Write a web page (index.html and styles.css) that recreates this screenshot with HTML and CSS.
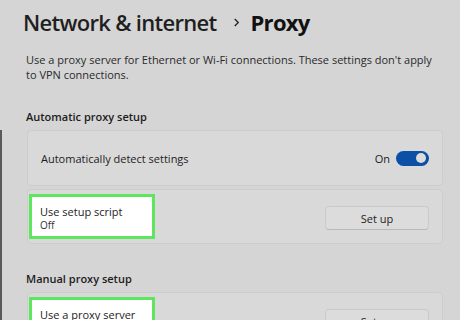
FILE: index.html
```html
<!DOCTYPE html>
<html lang="en">
<head>
    <meta charset="UTF-8">
    <meta name="viewport" content="width=device-width, initial-scale=1.0">
    <title>Proxy</title>
    <link rel="stylesheet" href="styles.css">
</head>
<body>
    <div class="settings">
        <h1 class="breadcrumb">
            <span class="crumb">Network &amp; internet</span>
            <svg class="chevron" viewBox="0 0 8 12" xmlns="http://www.w3.org/2000/svg">
                <path d="M2 2l4 4-4 4"/>
            </svg>
            <span class="current">Proxy</span>
        </h1>
        <p class="description">Use a proxy server for Ethernet or Wi-Fi connections. These settings don't apply to VPN connections.</p>

        <h2 class="section-title">Automatic proxy setup</h2>
        <div class="card">
            <span class="card-label">Automatically detect settings</span>
            <div class="toggle-wrap">
                <span class="toggle-state">On</span>
                <span class="toggle"><span class="knob"></span></span>
            </div>
        </div>
        <div class="card card-hl">
            <div class="highlight">
                <span class="card-label">Use setup script</span>
                <span class="card-sub">Off</span>
            </div>
            <button class="setup-btn">Set up</button>
        </div>

        <h2 class="section-title manual">Manual proxy setup</h2>
        <div class="card card-hl">
            <div class="highlight">
                <span class="card-label">Use a proxy server</span>
            </div>
            <button class="setup-btn">Set up</button>
        </div>
    </div>
</body>
</html>
```
FILE: styles.css
```css
body {
    margin: 0;
    background: #d5d5d5;
    font-family: 'Open Sans', 'Noto Sans', sans-serif;
    color: #1c1c1c;
    overflow: hidden;
}
.settings {
    position: relative;
    padding: 6px 17px 0 26px;
}
.settings::before {
    content: '';
    position: absolute;
    left: 0;
    top: 130px;
    width: 2px;
    height: 200px;
    background: #5a5a5a;
}
.breadcrumb {
    display: flex;
    align-items: center;
    margin: 0 0 0 -3px;
    font-size: 22px;
    line-height: 32px;
    font-weight: 600;
    color: #1f1f1f;
    letter-spacing: -0.7px;
}
.chevron {
    width: 7px;
    height: 11px;
    margin: 0 11px 0 16px;
    fill: none;
    stroke: #222;
    stroke-width: 1.5;
}
.current {
    font-weight: 700;
    color: #111;
}
.description {
    margin: 14px 0 0;
    font-size: 11px;
    line-height: 15px;
    color: #2a2a2a;
}
.section-title {
    margin: 28px 0 0;
    font-size: 11px;
    line-height: 14px;
    font-weight: 600;
    color: #1c1c1c;
}
.section-title.manual {
    margin-top: 28px;
}
.card {
    display: flex;
    align-items: center;
    justify-content: space-between;
    margin: 6px 0 0 1px;
    height: 56px;
    box-sizing: border-box;
    padding: 0 13px;
    background: #d9d9d9;
    border: 1px solid #cdcdcd;
    border-radius: 4px;
}
.card + .card {
    margin-top: 3px;
    height: 55px;
}
.card-hl {
    align-items: flex-start;
    padding: 4px 13px 0 1px;
}
.card-label {
    font-size: 11px;
    color: #1c1c1c;
}
.toggle-wrap {
    display: flex;
    align-items: center;
    gap: 6px;
}
.toggle-state {
    font-size: 11px;
}
.toggle {
    display: flex;
    align-items: center;
    justify-content: flex-end;
    width: 33px;
    height: 15px;
    box-sizing: border-box;
    padding-right: 3px;
    background: #0b4fa6;
    border-radius: 8px;
}
.knob {
    width: 10px;
    height: 10px;
    border-radius: 50%;
    background: #dcdcdc;
}
.highlight {
    display: flex;
    flex-direction: column;
    width: 126px;
    height: 45px;
    box-sizing: border-box;
    padding: 8px 8px 0;
    background: #fff;
    border: 3px solid #5ee65e;
}
.highlight .card-label {
    line-height: 14px;
}
.card-sub {
    font-size: 10px;
    line-height: 13px;
    color: #333;
}
.setup-btn {
    width: 104px;
    height: 24px;
    margin-top: 12px;
    font-family: inherit;
    font-size: 11px;
    color: #1c1c1c;
    background: #dcdcdc;
    border: 1px solid #cacaca;
    border-bottom-color: #b8b8b8;
    border-radius: 4px;
}
```
